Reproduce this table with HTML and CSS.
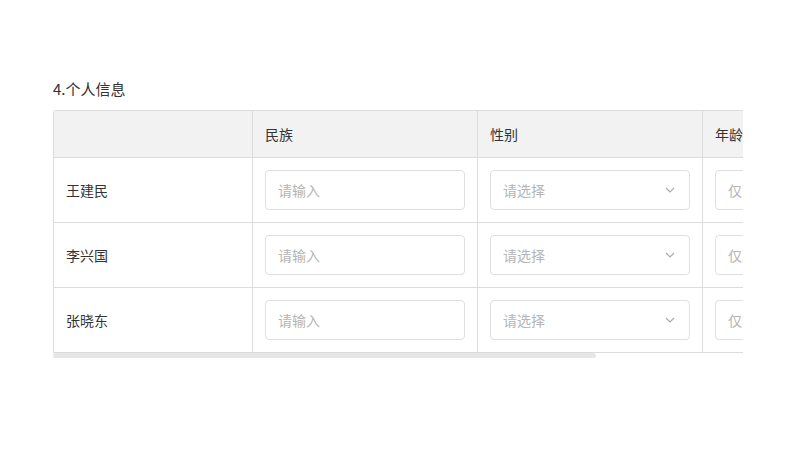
FILE: index.html
```html
<!DOCTYPE html>
<html lang="zh">
<head>
<meta charset="utf-8">
<link rel="stylesheet" href="styles.css">
</head>
<body>
<div class="page">
  <div class="title">4.个人信息</div>
  <div class="table-wrap">
    <table class="grid">
      <colgroup>
        <col class="c-name"><col class="c-field"><col class="c-field"><col class="c-field">
      </colgroup>
      <thead>
        <tr><th></th><th>民族</th><th>性别</th><th>年龄</th></tr>
      </thead>
      <tbody>
        <tr>
          <td>王建民</td>
          <td><div class="input">请输入</div></td>
          <td><div class="input select">请选择<svg class="chev" viewBox="0 0 10 6" width="10" height="6"><path d="M1 1l4 4 4-4" fill="none" stroke="#a8abb2" stroke-width="1.2"/></svg></div></td>
          <td><div class="input">仅限数字</div></td>
        </tr>
        <tr>
          <td>李兴国</td>
          <td><div class="input">请输入</div></td>
          <td><div class="input select">请选择<svg class="chev" viewBox="0 0 10 6" width="10" height="6"><path d="M1 1l4 4 4-4" fill="none" stroke="#a8abb2" stroke-width="1.2"/></svg></div></td>
          <td><div class="input">仅限数字</div></td>
        </tr>
        <tr>
          <td>张晓东</td>
          <td><div class="input">请输入</div></td>
          <td><div class="input select">请选择<svg class="chev" viewBox="0 0 10 6" width="10" height="6"><path d="M1 1l4 4 4-4" fill="none" stroke="#a8abb2" stroke-width="1.2"/></svg></div></td>
          <td><div class="input">仅限数字</div></td>
        </tr>
      </tbody>
    </table>
  </div>
  <div class="scrollbar"><div class="thumb" style="width: 543px"></div></div>
</div>
</body>
</html>
```
FILE: styles.css
```css
html, body {
  margin: 0;
  padding: 0;
  background: #fff;
}
body {
  font-family: "Noto Sans CJK SC", "Liberation Sans", sans-serif;
  color: #333;
  font-size: 14px;
}
.page {
  padding: 79px 0 0 53px;
}
.title {
  font-size: 15px;
  line-height: 20px;
  color: #333;
  margin-bottom: 11px;
}
.table-wrap {
  width: 690px;
  overflow: hidden;
  border-top-left-radius: 3px;
}
.grid {
  border-collapse: collapse;
  table-layout: fixed;
  width: 875px;
}
.c-name { width: 199px; }
.c-field { width: 225px; }
.grid th, .grid td {
  border: 1px solid #dcdcdc;
  text-align: left;
  padding: 0 12px;
  font-weight: normal;
  line-height: 20px;
}
.grid th {
  background: #f2f2f2;
  height: 46px;
  color: #333;
}
.grid td {
  height: 64px;
  padding-top: 12px;
  padding-bottom: 12px;
  box-sizing: border-box;
  color: #333;
}
.input {
  width: 200px;
  height: 40px;
  box-sizing: border-box;
  border: 1px solid #dfdfdf;
  border-radius: 4px;
  padding: 0 12px;
  display: flex;
  align-items: center;
  color: #b5b5b5;
  font-size: 14px;
  line-height: 18px;
  white-space: nowrap;
  overflow: hidden;
}
.select {
  justify-content: space-between;
}
.chev {
  margin-right: 2px;
}
.scrollbar {
  width: 690px;
  height: 6px;
}
.thumb {
  height: 5px;
  background: #e6e6e6;
  border-radius: 3px;
}
```
